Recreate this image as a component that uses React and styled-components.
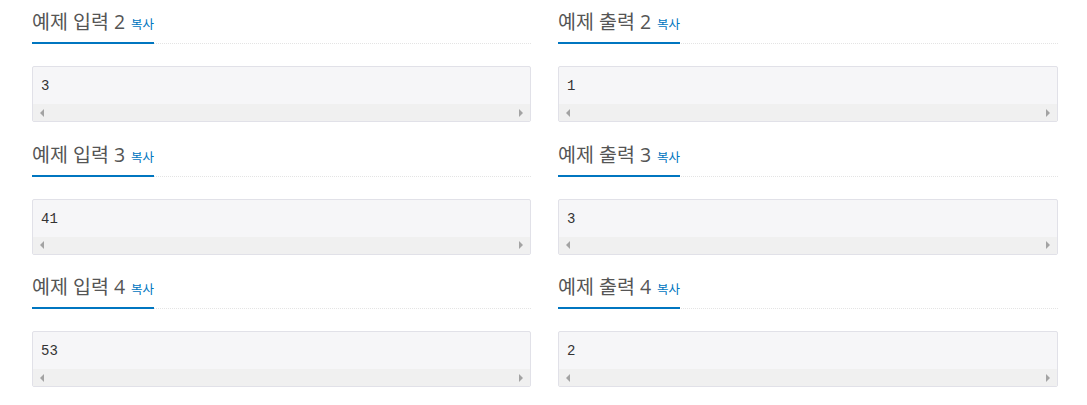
import React from 'react';
import styled, { createGlobalStyle } from 'styled-components';

const GlobalStyle = createGlobalStyle`
  body {
    margin: 0;
    background: #fff;
    font-family: 'Open Sans', 'Noto Sans CJK KR', sans-serif;
  }
`;

const Page = styled.div`
  display: grid;
  grid-template-columns: 499px 500px;
  column-gap: 27px;
  padding-left: 32px;
`;

const Section = styled.section`
  margin-bottom: 10.5px;
`;

const Headline = styled.div`
  border-bottom: 1px dotted #e4e4e4;
  margin-bottom: 22px;
`;

const Title = styled.h2`
  display: inline-flex;
  align-items: baseline;
  margin: 0 0 -1px;
  padding: 10px 0 8px;
  border-bottom: 2px solid #0076c0;
  font-family: 'Open Sans', 'Noto Sans CJK KR', sans-serif;
  font-size: 19.5px;
  line-height: 24px;
  font-weight: 400;
  color: #555;
`;

const CopyLink = styled.a`
  margin-left: 6px;
  font-size: 12.5px;
  line-height: 1;
  color: #0076c0;
  text-decoration: none;
  cursor: pointer;
`;

const Pre = styled.div`
  border: 1px solid #e1e1e8;
  border-radius: 2px;
  background: #f6f6f8;
  overflow: hidden;
`;

const Code = styled.pre`
  margin: 0;
  padding: 9px 8px 8px;
  font-family: 'Liberation Mono', 'DejaVu Sans Mono', monospace;
  font-size: 14px;
  line-height: 20px;
  color: #333;
`;

const ScrollBar = styled.div`
  height: 17px;
  background: #f0f0f0;
  display: flex;
  align-items: center;
  justify-content: space-between;
  padding: 0 7px;
`;

const Arrow = styled.span`
  width: 0;
  height: 0;
  border-top: 4px solid transparent;
  border-bottom: 4px solid transparent;
  ${(p) =>
    p.$dir === 'left'
      ? 'border-right: 4px solid #a3a3a3;'
      : 'border-left: 4px solid #a3a3a3;'}
`;

const samples = [
  { n: 2, input: '3', output: '1' },
  { n: 3, input: '41', output: '3' },
  { n: 4, input: '53', output: '2' },
];

const Sample = ({ title, value }) => (
  <Section>
    <Headline>
      <Title>
        {title}
        <CopyLink>복사</CopyLink>
      </Title>
    </Headline>
    <Pre>
      <Code>{value}</Code>
      <ScrollBar>
        <Arrow $dir="left" />
        <Arrow $dir="right" />
      </ScrollBar>
    </Pre>
  </Section>
);

const App = () => {
  return (
    <>
      <GlobalStyle />
      <Page>
        {samples.map((s) => (
          <React.Fragment key={s.n}>
            <Sample title={`예제 입력 ${s.n}`} value={s.input} />
            <Sample title={`예제 출력 ${s.n}`} value={s.output} />
          </React.Fragment>
        ))}
      </Page>
    </>
  );
};

export default App;
